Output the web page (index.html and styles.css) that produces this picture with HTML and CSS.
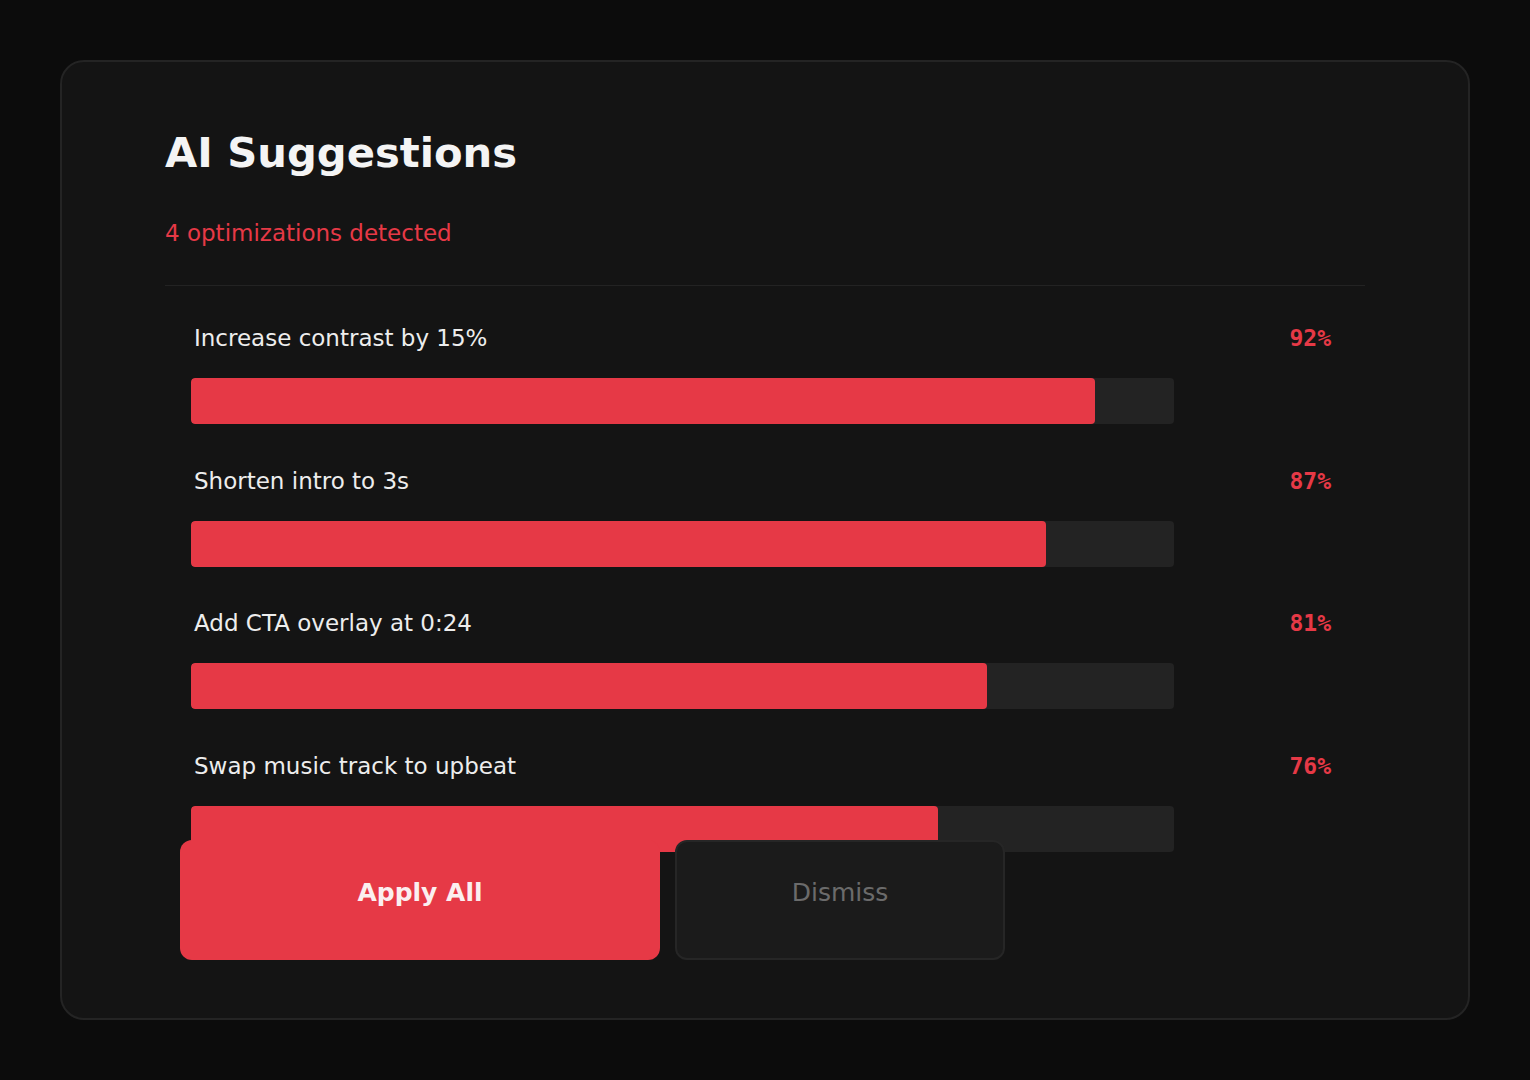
FILE: index.html
```html
<!DOCTYPE html>
<html lang="en">
<head>
<meta charset="utf-8">
<title>AI Suggestions</title>
<link rel="stylesheet" href="styles.css">
</head>
<body>
<main class="card">
  <h1 class="title">AI Suggestions</h1>
  <p class="subtitle">4 optimizations detected</p>
  <hr class="divider">
  <ul class="list">
    <li class="row">
      <div class="row-head">
        <span class="label">Increase contrast by 15%</span>
        <span class="pct">92%</span>
      </div>
      <div class="track"><div class="fill" style="width: 92%"></div></div>
    </li>
    <li class="row">
      <div class="row-head">
        <span class="label">Shorten intro to 3s</span>
        <span class="pct">87%</span>
      </div>
      <div class="track"><div class="fill" style="width: 87%"></div></div>
    </li>
    <li class="row">
      <div class="row-head">
        <span class="label">Add CTA overlay at 0:24</span>
        <span class="pct">81%</span>
      </div>
      <div class="track"><div class="fill" style="width: 81%"></div></div>
    </li>
    <li class="row">
      <div class="row-head">
        <span class="label">Swap music track to upbeat</span>
        <span class="pct">76%</span>
      </div>
      <div class="track"><div class="fill" style="width: 76%"></div></div>
    </li>
  </ul>
  <div class="actions">
    <button class="btn btn-primary" type="button">Apply All</button>
    <button class="btn btn-secondary" type="button">Dismiss</button>
  </div>
</main>
</body>
</html>
```

FILE: styles.css
```css
* { box-sizing: border-box; }

html, body {
  margin: 0;
  padding: 0;
  background: #0c0c0c;
  font-family: "DejaVu Sans", "Liberation Sans", sans-serif;
}

body {
  padding: 60px;
}

.card {
  width: 1410px;
  height: 960px;
  background: #141414;
  border: 2px solid #242424;
  border-radius: 24px;
  padding: 66px 103px 0;
}

.title {
  margin: 0;
  font-size: 41.7px;
  font-weight: 700;
  line-height: normal;
  color: #f4f4f4;
}

.subtitle {
  margin: 43px 0 0;
  font-size: 23px;
  line-height: normal;
  color: #e63946;
}

.divider {
  margin: 39px 0 0;
  border: 0;
  height: 1px;
  background: #232323;
}

.list {
  list-style: none;
  margin: 0;
  padding: 39px 34px 0 26px;
  display: flex;
  flex-direction: column;
  gap: 43.7px;
}

.row {
  display: flex;
  flex-direction: column;
  gap: 27px;
}

.row-head {
  display: flex;
  align-items: baseline;
  justify-content: space-between;
}

.label {
  margin-left: 3px;
  font-size: 23px;
  line-height: normal;
  color: #ededed;
}

.pct {
  font-family: "DejaVu Sans Mono", "Liberation Mono", monospace;
  font-weight: 700;
  font-size: 23px;
  line-height: normal;
  color: #e63946;
}

.track {
  width: 983px;
  height: 46px;
  background: #232323;
  border-radius: 4px;
  overflow: hidden;
}

.fill {
  height: 100%;
  background: #e63946;
  border-radius: 4px;
}

.actions {
  display: flex;
  gap: 15px;
  margin: -12px 0 0 15px;
  position: relative;
}

.btn {
  height: 120px;
  border-radius: 12px;
  text-align: center;
  font-family: "DejaVu Sans", "Liberation Sans", sans-serif;
  font-size: 25px;
  line-height: normal;
  display: flex;
  justify-content: center;
  align-items: flex-start;
  cursor: pointer;
}

.btn-primary {
  width: 480px;
  background: #e63946;
  border: 0;
  padding: 38px 0 0;
  color: #fbeff0;
  font-weight: 700;
}

.btn-secondary {
  width: 330px;
  background: #1b1b1b;
  border: 2px solid #262626;
  padding: 36px 0 0;
  color: #6b6b6b;
}
```
